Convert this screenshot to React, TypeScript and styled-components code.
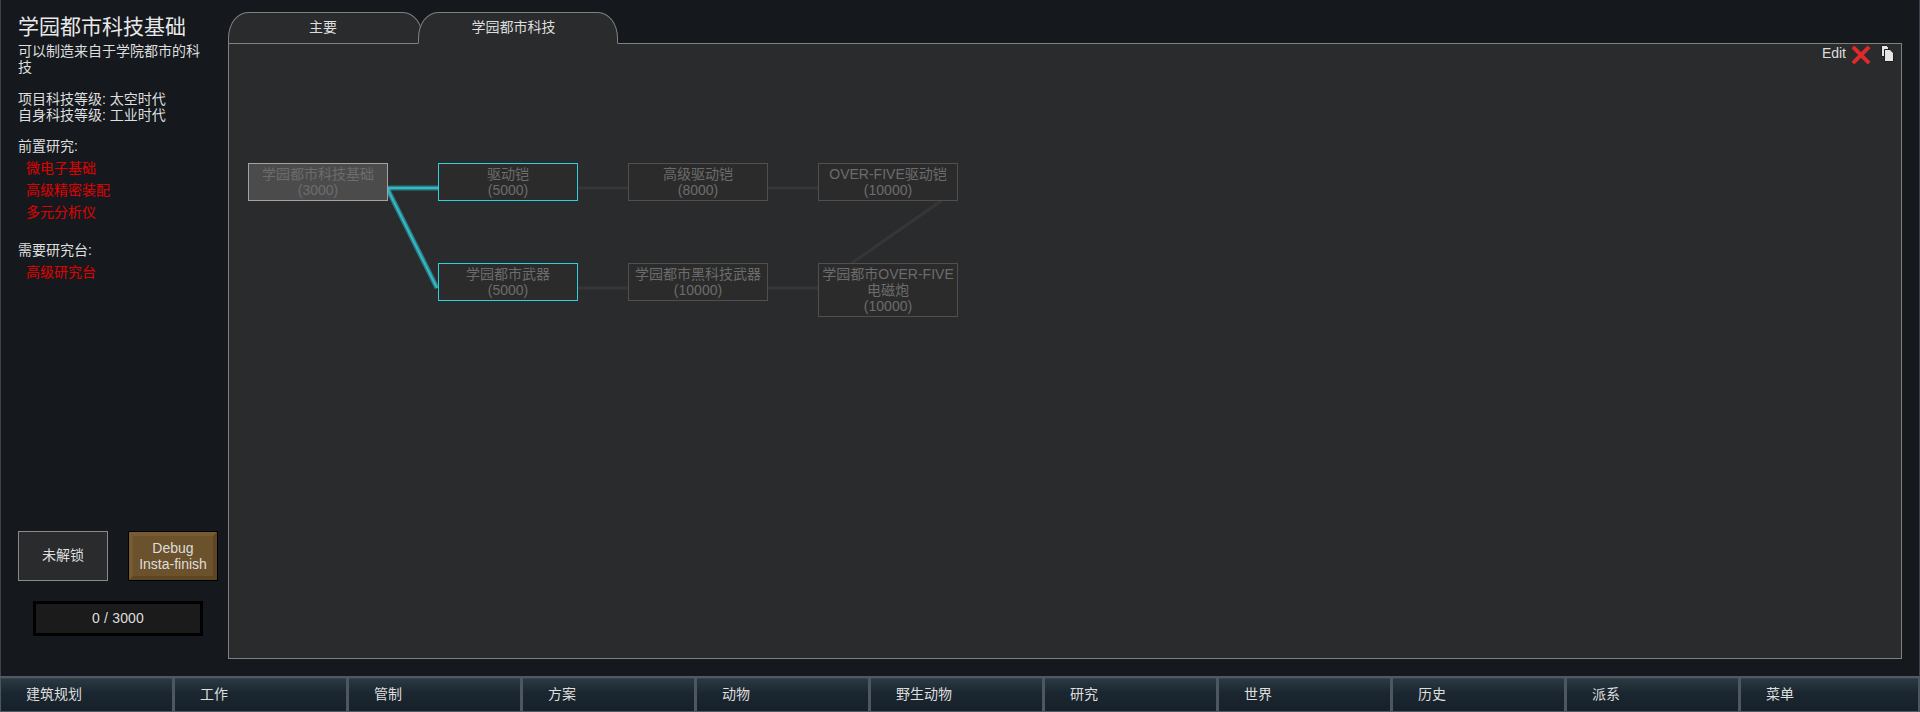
import React from "react";
import styled, { createGlobalStyle } from "styled-components";

const FONT = `"Liberation Sans", "Noto Sans CJK SC", sans-serif`;

const Global = createGlobalStyle`
  html, body { margin: 0; padding: 0; background: #15191e; }
  * { box-sizing: border-box; }
`;

const Page = styled.div`
  width: 1920px;
  height: 712px;
  display: grid;
  grid-template-rows: 676px 36px;
  font-family: ${FONT};
  font-size: 14px;
  line-height: 16px;
  color: #dedede;
  overflow: hidden;
`;

const Window = styled.div`
  display: flex;
  background: #15191e;
  border-left: 1px solid #3b4552;
  border-right: 1px solid #3b4552;
  min-height: 0;
`;

const Sidebar = styled.aside`
  width: 227px;
  flex: none;
  padding: 15px 10px 40px 17px;
  display: flex;
  flex-direction: column;
`;

const Title = styled.h1`
  margin: 0 0 4px;
  font-size: 21px;
  line-height: 24px;
  font-weight: 400;
  color: #e8e8e8;
`;

const Desc = styled.p`
  margin: 0;
  width: 186px;
`;

const Block = styled.div<{ $top: number }>`
  margin-top: ${(p) => p.$top}px;
`;

const ReqItem = styled.div`
  color: #e00000;
  height: 22px;
  line-height: 22px;
  padding-left: 8px;
`;

const ReqList = styled.div`
  margin-top: 3px;
`;

const Actions = styled.div`
  margin-top: auto;
  display: flex;
  justify-content: space-between;
`;

const LockButton = styled.div`
  width: 90px;
  height: 50px;
  display: flex;
  align-items: center;
  justify-content: center;
  padding-bottom: 2px;
  background: #2a2b2d;
  border: 1px solid #8a8a8a;
`;

const DebugButton = styled.div`
  width: 88px;
  height: 48px;
  margin: 1px;
  display: flex;
  align-items: center;
  justify-content: center;
  text-align: center;
  background: #6b522c;
  border: 4px solid;
  border-color: #775c33 #5c4624 #5c4624 #775c33;
  outline: 1px solid #000;
`;

const Progress = styled.div`
  width: 170px;
  height: 35px;
  margin: 20px 0 0 15px;
  display: flex;
  align-items: center;
  justify-content: center;
  padding-bottom: 1px;
  letter-spacing: 0.2px;
  background: #1b1b1b;
  border: 3px solid #000;
`;

const Main = styled.main`
  flex: 1;
  min-width: 0;
  display: flex;
  flex-direction: column;
  padding: 12px 17px 17px 0;
`;

const Tabs = styled.div`
  display: flex;
  height: 31px;
  flex: none;
  position: relative;
  z-index: 1;
`;

const Tab = styled.div<{ $active?: boolean }>`
  height: 32px;
  width: ${(p) => (p.$active ? 200 : 195)}px;
  margin-left: ${(p) => (p.$active ? -5 : 0)}px;
  display: flex;
  align-items: center;
  justify-content: center;
  padding: 0 ${(p) => (p.$active ? 9 : 5)}px 2px 0;
  background: #2a2b2d;
  border: 1px solid #808080;
  border-bottom: ${(p) => (p.$active ? "1px solid #2a2b2d" : "1px solid #808080")};
  border-radius: 20px 20px 0 0 / 26px 26px 0 0;
  position: relative;
  z-index: ${(p) => (p.$active ? 2 : 1)};
`;

const Content = styled.section`
  flex: 1;
  position: relative;
  background: #2a2b2d;
  border: 1px solid #808080;
  min-height: 0;
`;

const Tools = styled.div`
  position: absolute;
  top: 1px;
  right: 7px;
  display: flex;
  align-items: flex-start;
  gap: 3px;
`;

const EditLabel = styled.span`
  margin-right: 2px;
`;

const CopyIcon = styled.svg`
  margin-left: 7px;
`;

const Edges = styled.svg`
  position: absolute;
  left: 0;
  top: 0;
  width: 100%;
  height: 100%;
`;

type NodeKind = "done" | "ready" | "locked";

const Node = styled.div<{ $kind: NodeKind; $x: number; $y: number; $h: number }>`
  position: absolute;
  left: ${(p) => p.$x}px;
  top: ${(p) => p.$y}px;
  width: 140px;
  height: ${(p) => p.$h}px;
  display: flex;
  align-items: center;
  justify-content: center;
  text-align: center;
  padding-bottom: 1px;
  color: #6c6c6c;
  background: ${(p) => (p.$kind === "done" ? "#4b4b4b" : "#2b2b2b")};
  border: 1px solid
    ${(p) =>
      p.$kind === "done" ? "#a3a3a3" : p.$kind === "ready" ? "#2fd0dc" : "#4f4f4f"};
`;

const BottomBar = styled.nav`
  display: grid;
  grid-template-columns: repeat(10, 174px) 1fr;
  padding: 0 2px 0 1px;
  background: #4a5560;
  border-top: 2px solid #4f5a64;
  border-bottom: 1px solid #4f5a64;
`;

const BarButton = styled.div`
  display: flex;
  align-items: center;
  padding: 0 0 2px 25px;
  background: linear-gradient(#2c3a42, #1b2730 45%, #16202a);
  border-right: 3px solid #4d5760;
  box-shadow: inset 0 1px 0 #36434c;

  &:last-child {
    border-right: none;
  }
`;

const nodes: { k: NodeKind; x: number; y: number; h?: number; t: string[] }[] = [
  { k: "done", x: 19, y: 119, t: ["学园都市科技基础", "(3000)"] },
  { k: "ready", x: 209, y: 119, t: ["驱动铠", "(5000)"] },
  { k: "locked", x: 399, y: 119, t: ["高级驱动铠", "(8000)"] },
  { k: "locked", x: 589, y: 119, t: ["OVER-FIVE驱动铠", "(10000)"] },
  { k: "ready", x: 209, y: 219, t: ["学园都市武器", "(5000)"] },
  { k: "locked", x: 399, y: 219, t: ["学园都市黑科技武器", "(10000)"] },
  { k: "locked", x: 589, y: 219, h: 54, t: ["学园都市OVER-FIVE", "电磁炮", "(10000)"] },
];

const menu = ["建筑规划", "工作", "管制", "方案", "动物", "野生动物", "研究", "世界", "历史", "派系", "菜单"];

export default function App() {
  return (
    <Page>
      <Global />
      <Window>
        <Sidebar>
          <Title>学园都市科技基础</Title>
          <Desc>可以制造来自于学院都市的科技</Desc>
          <Block $top={16}>
            <div>项目科技等级: 太空时代</div>
            <div>自身科技等级: 工业时代</div>
          </Block>
          <Block $top={15}>
            <div>前置研究:</div>
            <ReqList>
              <ReqItem>微电子基础</ReqItem>
              <ReqItem>高级精密装配</ReqItem>
              <ReqItem>多元分析仪</ReqItem>
            </ReqList>
          </Block>
          <Block $top={19}>
            <div>需要研究台:</div>
            <ReqList>
              <ReqItem>高级研究台</ReqItem>
            </ReqList>
          </Block>
          <Actions>
            <LockButton>未解锁</LockButton>
            <DebugButton>
              Debug
              <br />
              Insta-finish
            </DebugButton>
          </Actions>
          <Progress>0 / 3000</Progress>
        </Sidebar>
        <Main>
          <Tabs>
            <Tab>主要</Tab>
            <Tab $active>学园都市科技</Tab>
          </Tabs>
          <Content>
            <Edges>
              <g stroke="#353737" strokeWidth="3" fill="none">
                <line x1="348" y1="144" x2="399" y2="144" />
                <line x1="538" y1="144" x2="589" y2="144" />
                <line x1="348" y1="244" x2="399" y2="244" />
                <line x1="538" y1="244" x2="589" y2="244" />
                <line x1="712" y1="157" x2="623" y2="219" />
              </g>
              <g stroke="#2fc3cf" strokeOpacity="0.55" strokeWidth="5" fill="none">
                <line x1="158" y1="144" x2="209" y2="144" />
                <line x1="158" y1="144" x2="208" y2="244" />
              </g>
              <g stroke="#2fbcc8" strokeWidth="2" fill="none">
                <line x1="158" y1="144" x2="209" y2="144" />
                <line x1="158" y1="144" x2="208" y2="244" />
              </g>
            </Edges>
            {nodes.map((n) => (
              <Node key={n.t[0]} $kind={n.k} $x={n.x} $y={n.y} $h={n.h ?? 38}>
                <div>
                  {n.t.map((l) => (
                    <div key={l}>{l}</div>
                  ))}
                </div>
              </Node>
            ))}
            <Tools>
              <EditLabel>Edit</EditLabel>
              <svg width="20" height="20" viewBox="0 0 20 20">
                <path d="M1.9 1.9 L18.1 18.1 M18.1 1.9 L1.9 18.1" stroke="#e02a2a" strokeWidth="4" fill="none" />
              </svg>
              <CopyIcon width="13" height="17" viewBox="0 0 13 17">
                <path d="M0.5 0.5h5l2 2v9h-7z" fill="#e4e4e4" stroke="#1c1c1c" strokeWidth="1" />
                <path d="M3.5 4.5h5.5l3.5 3.5v8.5h-9z" fill="#e4e4e4" stroke="#1c1c1c" strokeWidth="1" />
              </CopyIcon>
            </Tools>
          </Content>
        </Main>
      </Window>
      <BottomBar>
        {menu.map((m) => (
          <BarButton key={m}>{m}</BarButton>
        ))}
      </BottomBar>
    </Page>
  );
}
